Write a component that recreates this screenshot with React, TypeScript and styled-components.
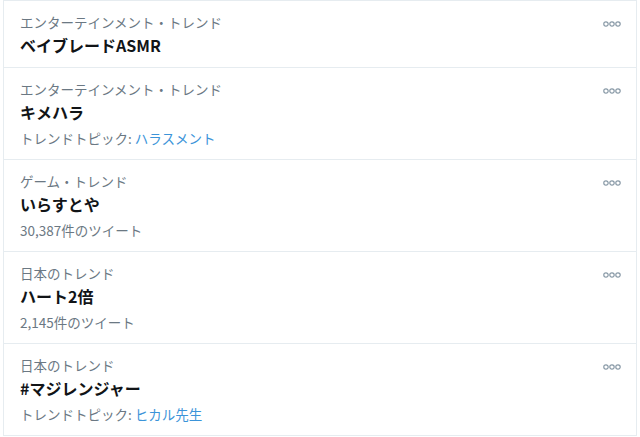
import React from "react";
import styled, { createGlobalStyle } from "styled-components";

const Global = createGlobalStyle`
  html, body { margin: 0; padding: 0; background: #ffffff; }
  body { font-family: "Noto Sans CJK JP", "Noto Sans", sans-serif; }
`;

const Panel = styled.div`
  margin: 0 3px 0 3px;
  width: 632px;
  border-left: 1px solid #e6ecf0;
  border-right: 1px solid #e6ecf0;
  border-top: 1px solid #e6ecf0;
  background: #fff;
`;

const Row = styled.div`
  display: flex;
  align-items: flex-start;
  padding: 11px 15px 10px 16px;
  border-bottom: 1px solid #e6ecf0;
`;

const Body = styled.div`
  flex: 1;
  display: flex;
  flex-direction: column;
`;

const Category = styled.div`
  font-size: 13.5px;
  line-height: 20px;
  color: #6b7883;
`;

const Title = styled.div`
  font-size: 16px;
  font-weight: 700;
  line-height: 24px;
  margin-top: 1px;
  color: #111417;
`;

const Sub = styled.div`
  font-size: 13.5px;
  line-height: 21px;
  margin-top: 4px;
  color: #6b7883;
`;

const Link = styled.span`
  color: #3b94d9;
`;

const More = styled.div`
  width: 18px;
  height: 23px;
  display: flex;
  align-items: center;
  justify-content: center;
`;

const Dots = () => (
  <svg width="18" height="6" viewBox="0 0 18 6">
    {[3, 9, 15].map((cx) => (
      <circle key={cx} cx={cx} cy={3} r={2.2} fill="none" stroke="#8899a6" strokeWidth={1.2} />
    ))}
  </svg>
);

type Trend = { cat: string; title: string; sub?: React.ReactNode };

const trends: Trend[] = [
  { cat: "エンターテインメント・トレンド", title: "ベイブレードASMR" },
  {
    cat: "エンターテインメント・トレンド",
    title: "キメハラ",
    sub: (
      <>
        トレンドトピック: <Link>ハラスメント</Link>
      </>
    ),
  },
  { cat: "ゲーム・トレンド", title: "いらすとや", sub: "30,387件のツイート" },
  { cat: "日本のトレンド", title: "ハート2倍", sub: "2,145件のツイート" },
  {
    cat: "日本のトレンド",
    title: "#マジレンジャー",
    sub: (
      <>
        トレンドトピック: <Link>ヒカル先生</Link>
      </>
    ),
  },
];

export default function App() {
  return (
    <>
      <Global />
      <Panel>
        {trends.map((t, i) => (
          <Row key={i}>
            <Body>
              <Category>{t.cat}</Category>
              <Title>{t.title}</Title>
              {t.sub && <Sub>{t.sub}</Sub>}
            </Body>
            <More>
              <Dots />
            </More>
          </Row>
        ))}
      </Panel>
    </>
  );
}
